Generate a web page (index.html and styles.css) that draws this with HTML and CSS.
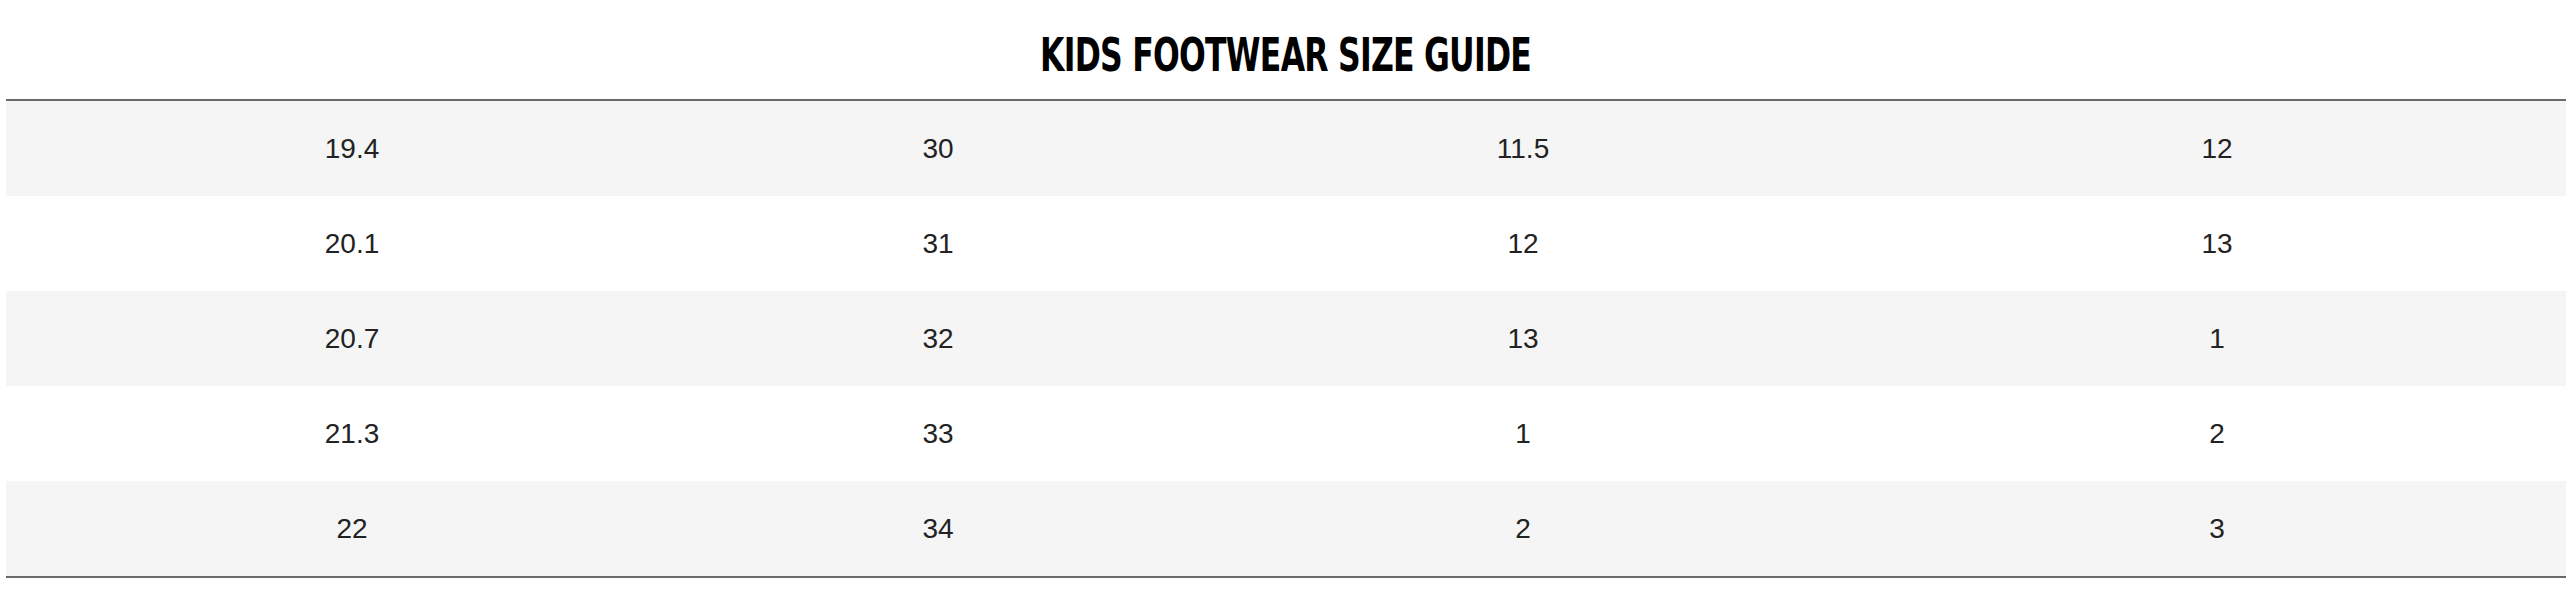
FILE: index.html
```html
<!DOCTYPE html>
<html lang="en">
<head>
<meta charset="utf-8">
<title>Kids Footwear Size Guide</title>
<link rel="stylesheet" href="styles.css">
</head>
<body>
<div class="page">
  <div class="heading"><h2 class="title"><span class="title-text">KIDS FOOTWEAR SIZE GUIDE</span></h2></div>
  <table class="sizes">
    <colgroup>
      <col class="c1"><col class="c2"><col class="c3"><col class="c4">
    </colgroup>
    <tbody>
      <tr><td>19.4</td><td>30</td><td>11.5</td><td>12</td></tr>
      <tr><td>20.1</td><td>31</td><td>12</td><td>13</td></tr>
      <tr><td>20.7</td><td>32</td><td>13</td><td>1</td></tr>
      <tr><td>21.3</td><td>33</td><td>1</td><td>2</td></tr>
      <tr><td>22</td><td>34</td><td>2</td><td>3</td></tr>
    </tbody>
  </table>
</div>
</body>
</html>
```
FILE: styles.css
```css
html, body {
  margin: 0;
  padding: 0;
  background: #fff;
}
.page {
  padding: 0 6px;
  font-family: "Liberation Sans", Arial, sans-serif;
  color: #222;
}
.heading {
  height: 99px;
  display: flex;
  align-items: center;
  justify-content: center;
  border-bottom: 2px solid #6a6a6a;
}
.title {
  margin: 0;
  padding-top: 10px;
  font-family: "DejaVu Sans Condensed", "DejaVu Sans", sans-serif;
  font-weight: bold;
  font-size: 47px;
  line-height: 1;
  color: #000;
}
.title-text {
  display: inline-block;
  transform: scaleX(0.745);
  letter-spacing: -1px;
}
.sizes {
  width: 100%;
  table-layout: fixed;
  border-collapse: collapse;
  border-bottom: 2px solid #6a6a6a;
}
.c1 { width: 692px; }
.c2 { width: 480px; }
.c3 { width: 690px; }
.c4 { width: 698px; }
.sizes td {
  height: 95px;
  padding: 0;
  text-align: center;
  vertical-align: middle;
  font-size: 28px;
  line-height: 1;
}
.sizes tr:nth-child(odd) {
  background: #f5f5f5;
}
```
